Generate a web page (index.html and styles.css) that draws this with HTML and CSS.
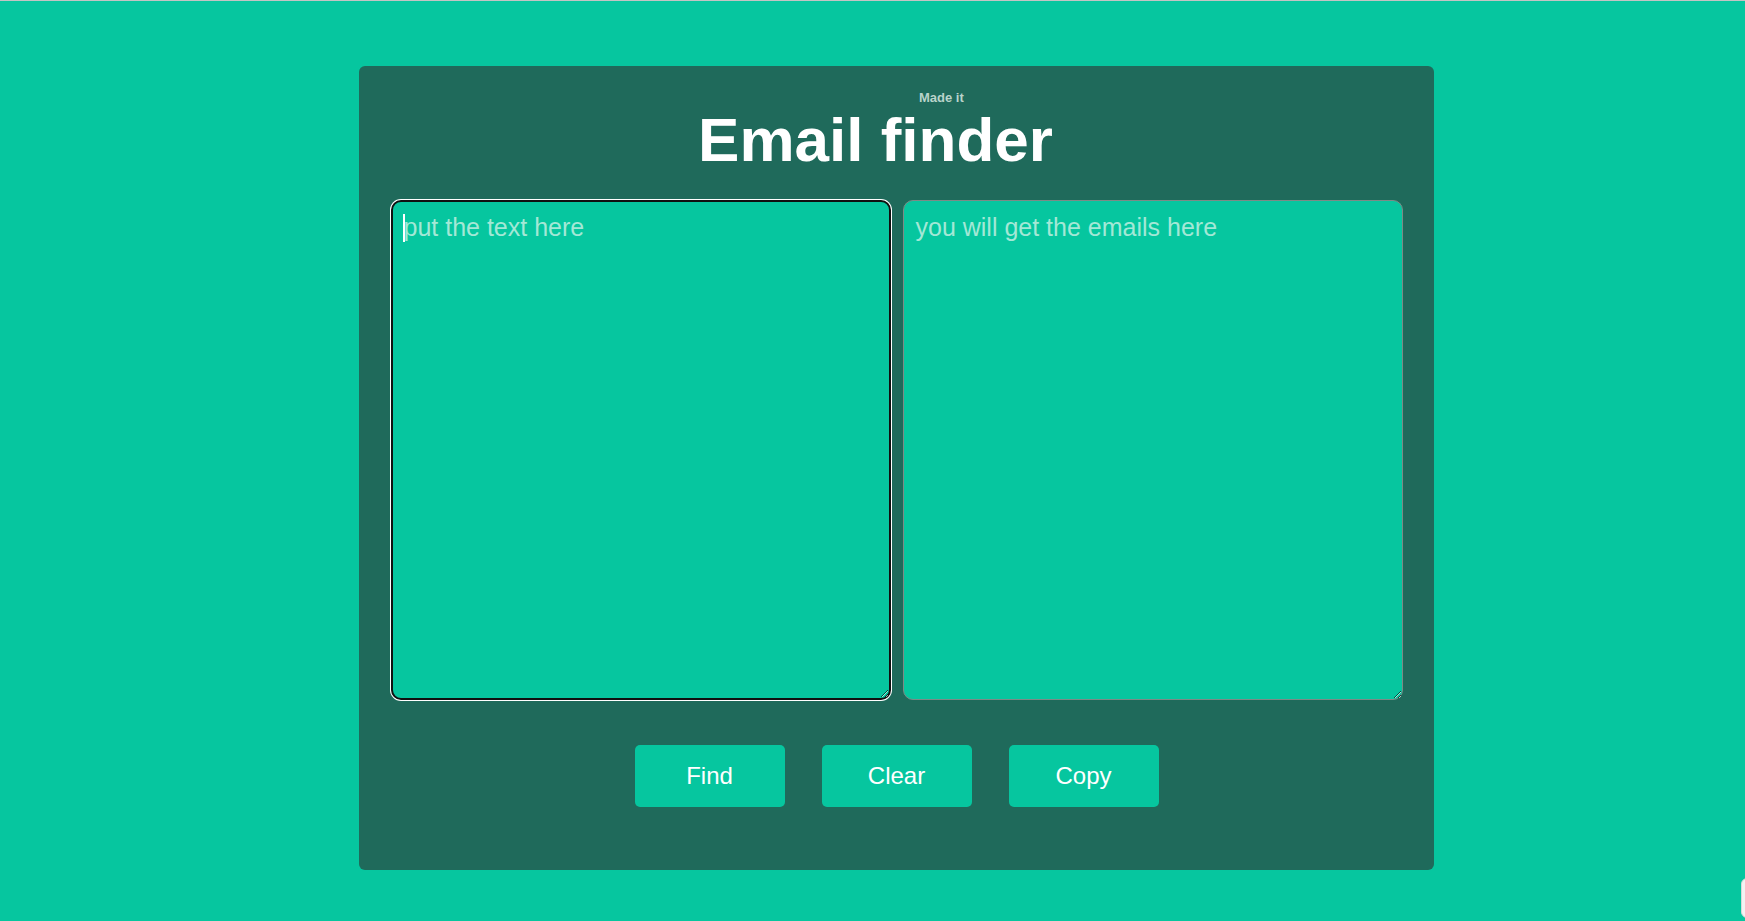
FILE: index.html
```html
<!DOCTYPE html>
<html lang="en">
<head>
<meta charset="utf-8">
<title>Email finder</title>
<link rel="stylesheet" href="styles.css">
</head>
<body>
<main class="card">
  <h1 class="title">Email finder<span class="made">Made it</span></h1>
  <div class="fields">
    <div class="field">
      <textarea class="box box-focused" placeholder="put the text here"></textarea>
      <span class="caret"></span>
    </div>
    <div class="field">
      <textarea class="box" placeholder="you will get the emails here" readonly></textarea>
    </div>
  </div>
  <div class="actions">
    <button class="btn" type="button">Find</button>
    <button class="btn" type="button">Clear</button>
    <button class="btn" type="button">Copy</button>
  </div>
</main>
<div class="side-tab"></div>
</body>
</html>
```
FILE: styles.css
```css
html {
  background: #06c69f;
}
body {
  margin: 0;
  border-top: 1px solid #c4c4c4;
  height: 920px;
  overflow: hidden;
  font-family: "Liberation Sans", Arial, sans-serif;
  background: #06c69f;
}
.card {
  box-sizing: border-box;
  width: 1075px;
  margin: 65px 0 0 359px;
  padding: 37px 0 63px;
  background: #1f6a5b;
  border-radius: 6px;
  display: flex;
  flex-direction: column;
  align-items: center;
}
.title {
  position: relative;
  align-self: stretch;
  margin: 0;
  padding-right: 42px;
  text-align: center;
  font-size: 62px;
  line-height: 74px;
  font-weight: bold;
  color: #ffffff;
}
.made {
  position: absolute;
  left: 560px;
  top: -13px;
  font-size: 13px;
  line-height: 15px;
  font-weight: bold;
  color: #b9d3ca;
}
.fields {
  display: flex;
  gap: 12px;
  margin-top: 23px;
}
.field {
  position: relative;
  width: 500px;
  height: 500px;
}
.box {
  box-sizing: border-box;
  display: block;
  width: 500px;
  height: 500px;
  margin: 0;
  padding: 12px;
  border: 1px solid #7d8a86;
  border-radius: 10px;
  background: #06c69f;
  color: #ffffff;
  font-family: "Liberation Sans", Arial, sans-serif;
  font-size: 25px;
  outline: none;
  resize: both;
}
.box::placeholder {
  color: #a3e8d6;
  opacity: 1;
}
.box-focused {
  border: 2px solid #101010;
  padding: 11px;
  box-shadow: 0 0 0 1px #ffffff;
}
.caret {
  position: absolute;
  left: 12px;
  top: 14px;
  width: 2px;
  height: 28px;
  background: #ffffff;
}
.actions {
  display: flex;
  gap: 37px;
  margin-top: 45px;
}
.btn {
  width: 150px;
  height: 62px;
  border: none;
  border-radius: 5px;
  background: #06c69f;
  color: #ffffff;
  font-family: "Liberation Sans", Arial, sans-serif;
  font-size: 24px;
  padding: 0;
  cursor: pointer;
}
.side-tab {
  position: fixed;
  left: 1741px;
  top: 878px;
  width: 30px;
  height: 38px;
  background: #f3f3f3;
  border: 1px solid #d8d8d8;
  border-radius: 6px;
}
```
